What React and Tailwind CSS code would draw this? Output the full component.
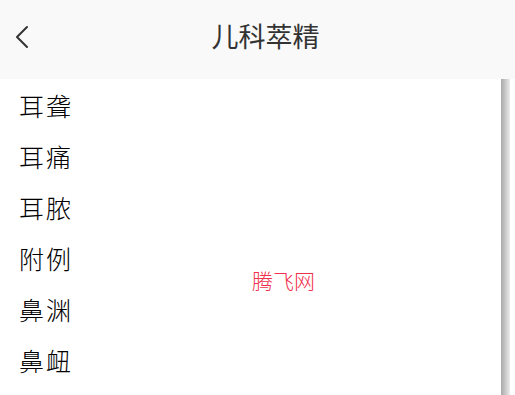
// 儿科萃精 list page: header + item list + scrollbar + watermark
const ITEMS = ['耳聋', '耳痛', '耳脓', '附例', '鼻渊', '鼻衄'];

const CJK = { fontFamily: '"Noto Sans CJK SC", "Noto Sans", sans-serif' };

export default function App() {
  return (
    <div className="w-[515px] h-[395px] bg-white overflow-hidden flex flex-col" style={CJK}>
      {/* Header */}
      <div className="h-[79px] bg-[#f9f9f9] flex items-center relative shrink-0">
        <button className="pl-[14px] pr-2 pb-[6px] h-full flex items-center">
          <svg width="16" height="24" viewBox="0 0 16 24" fill="none">
            <path d="M13 2 L3 12 L13 22" stroke="#333" strokeWidth="2" strokeLinecap="round" strokeLinejoin="round" />
          </svg>
        </button>
        <h1 className="absolute left-[16px] right-0 text-center text-[27px] text-[#333] pointer-events-none leading-none top-[22px]">
          儿科萃精
        </h1>
      </div>

      {/* Content */}
      <div className="flex-1 flex relative">
        <div className="flex-1 pt-px">
          {ITEMS.map((t) => (
            <div key={t} className="h-[51px] flex items-center pl-[19px] text-[25px] font-light tracking-[2px] text-black">
              {t}
            </div>
          ))}
        </div>
        <div className="w-[9px] mr-[5px] bg-gradient-to-r from-[#a9a9a9] via-[#c9c9c9] to-[#ececec]" />
        <div className="absolute left-[252px] top-[191px] text-[21px] font-light text-[#f0304e] leading-none">
          腾飞网
        </div>
      </div>
    </div>
  );
}
